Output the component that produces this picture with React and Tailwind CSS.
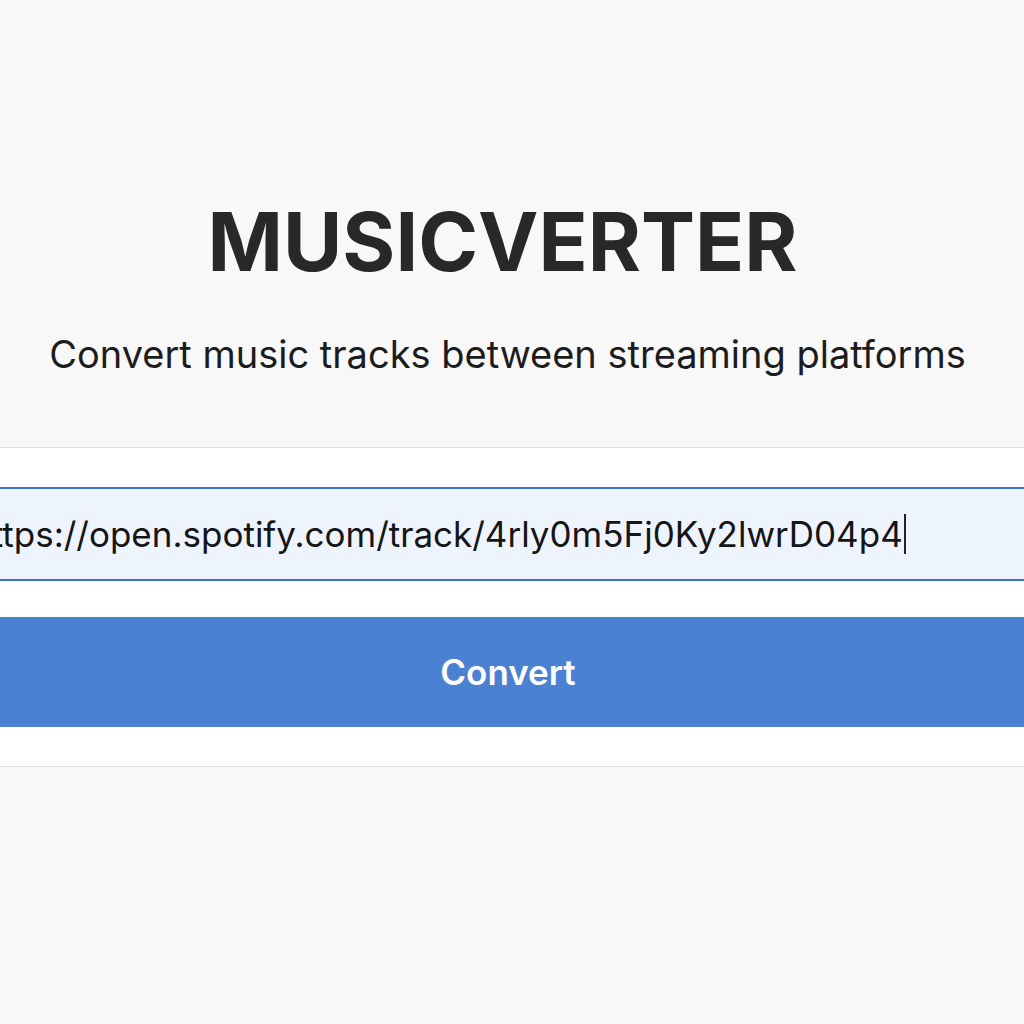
import React from 'react';

const App = () => {
  return (
    <div className="min-h-screen w-full bg-[#f8f8f8] overflow-hidden font-['Inter',sans-serif]">
      <div className="flex flex-col items-center pt-[202px] pr-[9px]">
        <h1 className="mr-[10px] text-[81px] leading-none font-bold text-[#282828]">MUSICVERTER</h1>
        <p className="mt-[52px] text-[38px] leading-none text-[#1c1c1c]">Convert music tracks between streaming platforms</p>
      </div>

      <div className="mt-[74px] w-full bg-white border-y border-[#dedede] py-[39px]">
        <div className="h-[94px] border-y-2 border-[#3a72c9] bg-[#eef4fd] flex items-center overflow-hidden whitespace-nowrap">
          <span className="-ml-[29px] text-[35px] text-[#151515]">https://open.spotify.com/track/4rly0m5Fj0Ky2lwrD04p4</span>
          <span className="ml-[1px] h-[40px] w-[2px] bg-[#222]"></span>
        </div>
        <button className="mt-[36px] w-full h-[110px] pr-[8px] bg-[#4a81d3] text-white text-[35px] font-semibold">
          Convert
        </button>
      </div>
    </div>
  );
};

export default App;
